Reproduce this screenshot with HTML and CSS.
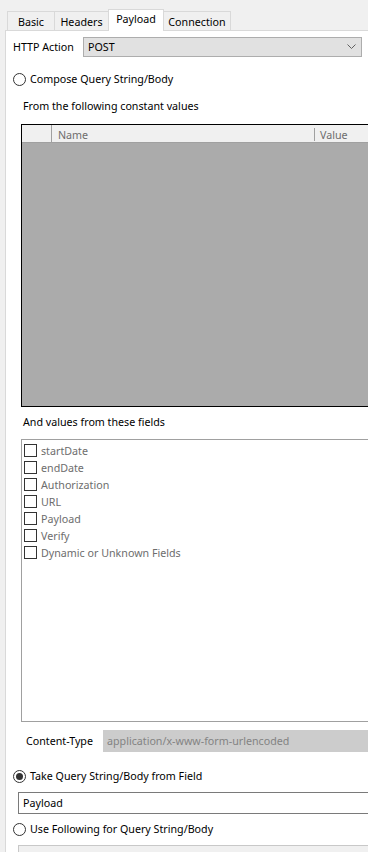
FILE: index.html
```html
<!DOCTYPE html>
<html>
<head>
<meta charset="utf-8">
<link rel="stylesheet" href="styles.css">
</head>
<body>
<div class="window">
  <div class="tabs">
    <div class="tab t-basic">Basic</div>
    <div class="tab t-headers">Headers</div>
    <div class="tab t-payload active">Payload</div>
    <div class="tab t-conn">Connection</div>
  </div>
  <div class="panel">
    <div class="action-row">
      <span class="action-label">HTTP Action</span>
      <div class="select">
        <span>POST</span>
        <svg class="chev" width="9" height="6" viewBox="0 0 9 6"><polyline points="0.5,0.5 4.5,4.5 8.5,0.5" fill="none" stroke="#606060" stroke-width="1"/></svg>
      </div>
    </div>
    <div class="radio-row r-compose"><span class="radio"></span><span>Compose Query String/Body</span></div>
    <div class="caption c-first">From the following constant values</div>
    <div class="grid">
      <div class="grid-head">
        <div class="rowhead"></div>
        <div class="col col-name">Name</div>
        <div class="col col-value">Value</div>
      </div>
      <div class="grid-body"></div>
    </div>
    <div class="caption c-second">And values from these fields</div>
    <div class="checklist">
      <div class="check-item"><span class="checkbox"></span><span>startDate</span></div>
      <div class="check-item"><span class="checkbox"></span><span>endDate</span></div>
      <div class="check-item"><span class="checkbox"></span><span>Authorization</span></div>
      <div class="check-item"><span class="checkbox"></span><span>URL</span></div>
      <div class="check-item"><span class="checkbox"></span><span>Payload</span></div>
      <div class="check-item"><span class="checkbox"></span><span>Verify</span></div>
      <div class="check-item"><span class="checkbox"></span><span>Dynamic or Unknown Fields</span></div>
    </div>
    <div class="ctype-row">
      <span class="ctype-label">Content-Type</span>
      <div class="ro-input">application/x-www-form-urlencoded</div>
    </div>
    <div class="radio-row r-take"><span class="radio checked"></span><span>Take Query String/Body from Field</span></div>
    <div class="text-input">Payload</div>
    <div class="radio-row r-use"><span class="radio"></span><span>Use Following for Query String/Body</span></div>
    <div class="bottom-box"></div>
  </div>
</div>
</body>
</html>
```
FILE: styles.css
```css
html, body {
  margin: 0;
  padding: 0;
  width: 368px;
  height: 852px;
  overflow: hidden;
  background: #f0f0f0;
  font-family: "Noto Sans", "Open Sans", sans-serif;
  font-size: 10.7px;
  color: #000;
}

.window {
  display: flex;
  flex-direction: column;
  height: 852px;
}

.tabs {
  height: 30px;
  display: flex;
  align-items: flex-end;
  padding-left: 7px;
  box-sizing: border-box;
  flex: none;
}

.tab {
  box-sizing: border-box;
  height: 19px;
  border: 1px solid #d9d9d9;
  border-bottom: none;
  background: #f0f0f0;
  display: flex;
  align-items: center;
  justify-content: center;
  padding-top: 1px;
  margin-left: -1px;
}

.t-basic { width: 48px; margin-left: 0; }
.t-headers { width: 55px; }
.t-payload { width: 56px; }
.t-conn { width: 68px; }

.tab.active {
  height: 22px;
  background: #fff;
  margin-bottom: -1px;
  position: relative;
  z-index: 1;
  padding-top: 0;
  padding-bottom: 3px;
}

.panel {
  flex: 1;
  min-height: 0;
  margin-left: 5px;
  background: #fff;
  border-left: 1px solid #d9d9d9;
  border-top: 1px solid #d9d9d9;
  overflow: hidden;
  display: flex;
  flex-direction: column;
}

.action-row {
  display: flex;
  align-items: center;
  height: 20px;
  margin-top: 6px;
  padding-left: 7px;
  padding-right: 6px;
  flex: none;
}

.action-label {
  width: 70px;
  flex: none;
}

.select {
  flex: 1;
  height: 20px;
  box-sizing: border-box;
  border: 1px solid #adadad;
  background: #e1e1e1;
  display: flex;
  align-items: center;
  justify-content: space-between;
  padding-left: 4px;
  padding-right: 5px;
}

.radio-row {
  display: flex;
  align-items: center;
  height: 16px;
  padding-left: 7px;
  gap: 4px;
  flex: none;
}

.r-compose { margin-top: 14px; }
.r-take { margin-top: 16px; }
.r-use { margin-top: 7px; }

.radio {
  width: 13px;
  height: 13px;
  box-sizing: border-box;
  border: 1px solid #333;
  border-radius: 50%;
  background: #fff;
  flex: none;
  display: flex;
  align-items: center;
  justify-content: center;
}

.radio.checked::after {
  content: "";
  width: 7px;
  height: 7px;
  border-radius: 50%;
  background: #333;
}

.caption {
  height: 16px;
  line-height: 16px;
  padding-left: 17px;
  flex: none;
}

.c-first { margin-top: 11px; }
.c-second { margin-top: 7px; }

.grid {
  margin-top: 10px;
  margin-left: 15px;
  margin-right: -20px;
  height: 283px;
  box-sizing: border-box;
  border: 1px solid #000;
  display: flex;
  flex-direction: column;
  flex: none;
}

.grid-head {
  height: 18px;
  box-sizing: border-box;
  background: #f0f0f0;
  border-bottom: 1px solid #a0a0a0;
  display: flex;
  color: #6d6d6d;
  flex: none;
}

.rowhead {
  width: 30px;
  box-sizing: border-box;
  border-right: 1px solid #a0a0a0;
  flex: none;
}

.col {
  display: flex;
  align-items: center;
  padding-left: 6px;
  padding-top: 2px;
  box-sizing: border-box;
}

.col-name {
  width: 263px;
  flex: none;
  position: relative;
}

.col-name::after {
  content: "";
  position: absolute;
  right: 0;
  top: 3px;
  bottom: 1px;
  width: 1px;
  background: #a0a0a0;
}

.col-value {
  flex: 1;
  padding-left: 5px;
}

.grid-body {
  flex: 1;
  background: #ababab;
}

.checklist {
  margin-top: 9px;
  margin-left: 15px;
  margin-right: -20px;
  height: 283px;
  box-sizing: border-box;
  border: 1px solid #a0a0a0;
  padding: 2px 0 0 2px;
  flex: none;
}

.check-item {
  height: 17px;
  display: flex;
  align-items: center;
  gap: 4px;
  color: #6d6d6d;
}

.checkbox {
  width: 13px;
  height: 13px;
  box-sizing: border-box;
  border: 1px solid #333;
  background: #fff;
  flex: none;
}

.ctype-row {
  margin-top: 8px;
  height: 22px;
  display: flex;
  align-items: center;
  padding-left: 20px;
  flex: none;
}

.ctype-label {
  width: 77px;
  flex: none;
}

.ro-input {
  flex: 1;
  height: 22px;
  background: #cccccc;
  color: #838383;
  display: flex;
  align-items: center;
  padding-left: 4px;
  margin-right: -20px;
}

.text-input {
  margin-top: 8px;
  margin-left: 12px;
  margin-right: -20px;
  height: 22px;
  box-sizing: border-box;
  border: 1px solid #7a7a7a;
  display: flex;
  align-items: center;
  padding-left: 4px;
  flex: none;
}

.bottom-box {
  margin-top: 8px;
  margin-left: 12px;
  margin-right: -20px;
  height: 30px;
  box-sizing: border-box;
  border: 1px solid #c8c8c8;
  background: #f0f0f0;
  flex: none;
}
```
